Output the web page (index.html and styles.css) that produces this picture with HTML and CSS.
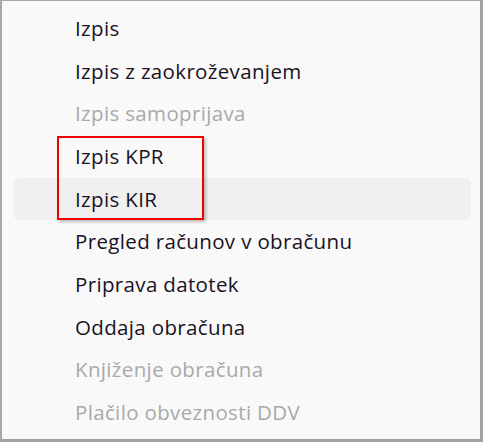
FILE: index.html
```html
<!DOCTYPE html>
<html lang="sl">
<head>
<meta charset="utf-8">
<link rel="stylesheet" href="styles.css">
</head>
<body>
<div class="menu">
  <ul class="items">
    <li class="item">Izpis</li>
    <li class="item">Izpis z zaokroževanjem</li>
    <li class="item disabled">Izpis samoprijava</li>
    <li class="item">Izpis KPR</li>
    <li class="item hover">Izpis KIR</li>
    <li class="item">Pregled računov v obračunu</li>
    <li class="item">Priprava datotek</li>
    <li class="item">Oddaja obračuna</li>
    <li class="item disabled">Knjiženje obračuna</li>
    <li class="item disabled">Plačilo obveznosti DDV</li>
  </ul>
  <div class="highlight"></div>
</div>
</body>
</html>
```
FILE: styles.css
```css
html, body {
  margin: 0;
  padding: 0;
  background: #f9f9f9;
}
.menu {
  position: relative;
  width: 483px;
  height: 442px;
  box-sizing: border-box;
  background: #f9f9f9;
  border-top: 1px solid #a9a9a9;
  border-left: 2px solid #a9a9a9;
  border-right: 3px solid #a0a0a0;
  border-bottom: 3px solid #a0a0a0;
  font-family: "Open Sans", "Noto Sans", sans-serif;
  font-size: 20.5px;
  font-weight: 500;
  letter-spacing: 0.35px;
  color: #1a1224;
}
.items {
  list-style: none;
  margin: 0;
  padding: 6px 9px 0 11px;
}
.item {
  height: 42.67px;
  line-height: 42.67px;
  padding-left: 62px;
  border-radius: 7px;
  box-sizing: border-box;
  white-space: nowrap;
}
.item.hover {
  background: #f0f0f0;
  padding-top: 1px;
  padding-bottom: 1px;
  line-height: 40.67px;
}
.item.disabled {
  color: #a9a9a9;
}
.highlight {
  position: absolute;
  left: 55px;
  top: 135px;
  width: 147px;
  height: 84px;
  box-sizing: border-box;
  border: 2px solid #f00000;
  box-shadow: 2px 2px 3px rgba(0, 0, 0, 0.25);
}
```
